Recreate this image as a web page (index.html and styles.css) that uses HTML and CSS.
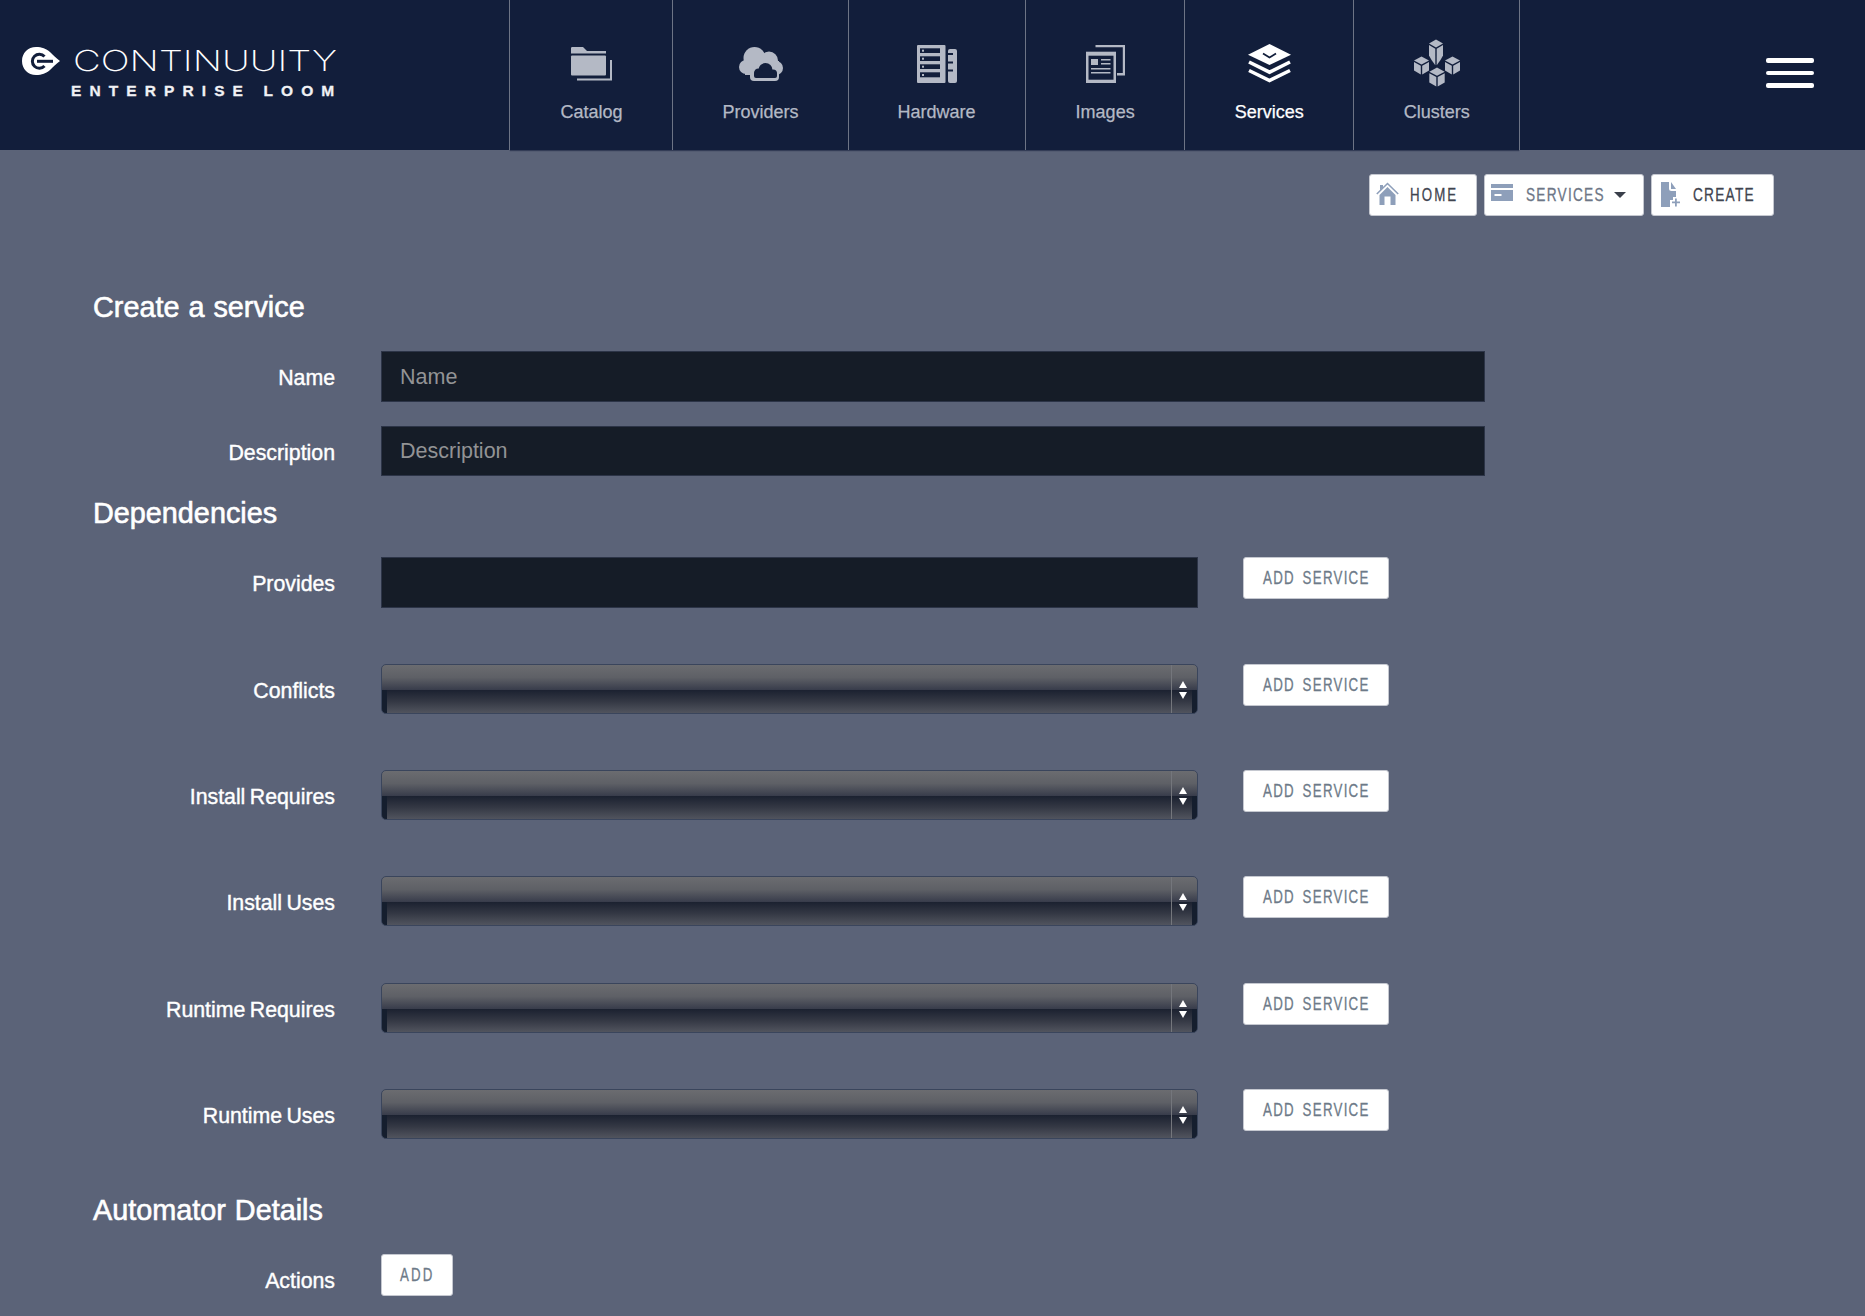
FILE: index.html
```html
<!DOCTYPE html>
<html lang="en">
<head>
<meta charset="utf-8">
<title>Continuuity Enterprise Loom</title>
<link rel="stylesheet" href="styles.css">
</head>
<body>
<header class="topbar">
  <div class="brand">
    <svg class="brand-mark" viewBox="0 0 38 28" aria-hidden="true">
      <path class="mark-fill" d="M14 0C20 0 24 1.500 28 5C31 8 34 11 38 14C34 17 31 20 28 23C24 26.500 20 28 14 28C6 28 0 22 0 14C0 6 6 0 14 0Z"/>
      <path class="mark-cut" d="M22.500 9.500A7 7 0 1 0 22.500 19"/>
      <path class="mark-cut" d="M15 14.300H31"/>
    </svg>
    <div class="brand-text">
      <div class="brand-name">CONTINUUITY</div>
      <div class="brand-sub">ENTERPRISE LOOM</div>
    </div>
  </div>
  <nav class="mainnav">
    <a class="navitem">
      <svg class="navicon" width="41" height="34" viewBox="0 0 41 34"><path d="M0 1.200Q0 0 1.200 0H12L16 4H35V6.500H0Z"/><rect y="8.500" width="35" height="20" rx="1"/><path d="M39 13H41V33.500H6V31.500H39Z"/></svg>
      <span>Catalog</span>
    </a>
    <a class="navitem">
      <svg class="navicon" width="44" height="34" viewBox="0 0 44 34"><circle cx="15.500" cy="11" r="11"/><circle cx="30" cy="13.500" r="9"/><circle cx="37" cy="21" r="7"/><circle cx="7" cy="20" r="7"/><rect x="6" y="14" width="34" height="14"/><rect x="11" y="20" width="29" height="14" rx="4"/><g class="icon-cut"><circle cx="26.500" cy="23" r="7"/><circle cx="19.500" cy="26" r="4.500"/><circle cx="34" cy="26.500" r="4"/><rect x="15" y="25" width="23" height="6" rx="2"/></g></svg>
      <span>Providers</span>
    </a>
    <a class="navitem">
      <svg class="navicon" width="40" height="38" viewBox="0 0 40 38"><rect width="28.500" height="38" rx="1"/><path d="M31 6Q31 4 33 4H38Q40 4 40 6V36Q40 38 38 38H33Q31 38 31 36Z"/><g class="icon-cut"><rect x="3" y="3.300" width="20" height="4.700"/><rect x="3" y="11.300" width="20" height="4.700"/><rect x="3" y="19.300" width="20" height="4.700"/><rect x="3" y="27.300" width="20" height="5"/><rect x="30" y="8" width="6" height="2"/><rect x="30" y="16.500" width="6" height="2"/><rect x="30" y="24.500" width="6" height="2"/></g><rect x="5" y="4.700" width="2" height="2"/><rect x="5" y="12.700" width="2" height="2"/><rect x="5" y="20.700" width="2" height="2"/><rect x="5" y="29" width="2" height="2"/></svg>
      <span>Hardware</span>
    </a>
    <a class="navitem">
      <svg class="navicon" width="39" height="38" viewBox="0 0 39 38"><path d="M9.500 0H39V30.500H31V28H36.800V2.300H9.500Z"/><rect y="6.700" width="30" height="31.300"/><g class="icon-cut"><rect x="2.500" y="10.700" width="25" height="24"/></g><rect x="5" y="14" width="7" height="6"/><rect x="15" y="14" width="9.500" height="1.500"/><rect x="15" y="18" width="9.500" height="1.500"/><rect x="5" y="23" width="19.500" height="1.500"/><rect x="5" y="27" width="19.500" height="1.500"/></svg>
      <span>Images</span>
    </a>
    <a class="navitem navitem-active">
      <svg class="navicon" width="43" height="38" viewBox="0 0 43 38"><path d="M21.500 0L43 10.700L21.500 21L0 10.700Z"/><path class="icon-line" d="M15 9.500L21.500 13.500L28 9.500"/><path class="icon-stroke" d="M1 18L21.500 28.200L42 18"/><path class="icon-stroke" d="M1 26.500L21.500 36.500L42 26.500"/></svg>
      <span>Services</span>
    </a>
    <a class="navitem">
      <svg class="navicon" width="46" height="47" viewBox="0 0 46 47">
        <g><path d="M22 0L29 4L22 8L15 4Z"/><path d="M15 5.500L21.300 9.200V25.700L17.500 20.500L15 16Z"/><path d="M29 5.500L22.700 9.200V25.700L26.500 20.500L29 16Z"/></g>
        <g><path d="M7.500 17L15 21L7.500 25L0 21Z"/><path d="M0 22.500L6.800 26.300V35L0 31Z"/><path d="M15 22.500L8.200 26.300V35L15 31Z"/></g>
        <g><path d="M38.500 17L46 21L38.500 25L31 21Z"/><path d="M31 22.500L37.800 26.300V35L31 31Z"/><path d="M46 22.500L39.200 26.300V35L46 31Z"/></g>
        <g><path d="M23 28L30.700 32.200L23 36.300L15.300 32.200Z"/><path d="M15.300 33.700L22.300 37.500V47L15.300 43Z"/><path d="M30.700 33.700L23.700 37.500V47L30.700 43Z"/></g>
      </svg>
      <span>Clusters</span>
    </a>
  </nav>
  <button class="burger" type="button" aria-label="Menu"><span></span><span></span><span></span></button>
</header>

<main class="page">
  <div class="crumbs">
    <a class="crumb crumb-home">
      <svg class="crumb-icon" width="23" height="23" viewBox="0 0 23 23"><path class="crumb-roof" d="M.800 12L11.500 1.500L22.200 12"/><path d="M4 3H7V5.500L4 8.500Z"/><path d="M3.500 13L11.500 5L19.500 13V23H14.500V14.500H8.500V23H3.500Z"/></svg>
      <span class="cond cond-home">HOME</span>
    </a>
    <a class="crumb crumb-services">
      <svg class="crumb-icon" width="22" height="17" viewBox="0 0 22 17"><rect width="22" height="4"/><rect y="6" width="22" height="11"/><rect class="crumb-cut" x="3.500" y="10" width="7" height="2"/></svg>
      <span class="cond cond-services">SERVICES</span>
      <i class="caret"></i>
    </a>
    <a class="crumb crumb-create">
      <svg class="crumb-icon" width="19" height="25" viewBox="0 0 19 25"><path d="M0 0H8V6.500Q8 9 10.500 9H15V15H12V18H9V25H0Z"/><path d="M10 0L15 7H10Z"/><path d="M14 16.500H15.800V19.500H19V21.300H15.800V24.500H14V21.300H11V19.500H14Z"/></svg>
      <span class="cond cond-create">CREATE</span>
    </a>
  </div>

  <form class="form">
    <h2 class="heading heading-first">Create a service</h2>
    <div class="row">
      <label class="row-label">Name</label>
      <input class="field field-wide" type="text" placeholder="Name">
    </div>
    <div class="row">
      <label class="row-label">Description</label>
      <input class="field field-wide" type="text" placeholder="Description">
    </div>

    <h2 class="heading heading-dep">Dependencies</h2>
    <div class="row row-dep">
      <label class="row-label">Provides</label>
      <input class="field field-mid" type="text">
      <button class="add add-service" type="button"><span class="cond cond-add">ADD SERVICE</span></button>
    </div>
    <div class="row row-dep">
      <label class="row-label">Conflicts</label>
      <div class="select"><div class="select-body"></div><div class="select-arrows"><i class="arrow-up"></i><i class="arrow-down"></i></div></div>
      <button class="add add-service" type="button"><span class="cond cond-add">ADD SERVICE</span></button>
    </div>
    <div class="row row-dep">
      <label class="row-label">Install Requires</label>
      <div class="select"><div class="select-body"></div><div class="select-arrows"><i class="arrow-up"></i><i class="arrow-down"></i></div></div>
      <button class="add add-service" type="button"><span class="cond cond-add">ADD SERVICE</span></button>
    </div>
    <div class="row row-dep">
      <label class="row-label">Install Uses</label>
      <div class="select"><div class="select-body"></div><div class="select-arrows"><i class="arrow-up"></i><i class="arrow-down"></i></div></div>
      <button class="add add-service" type="button"><span class="cond cond-add">ADD SERVICE</span></button>
    </div>
    <div class="row row-dep">
      <label class="row-label">Runtime Requires</label>
      <div class="select"><div class="select-body"></div><div class="select-arrows"><i class="arrow-up"></i><i class="arrow-down"></i></div></div>
      <button class="add add-service" type="button"><span class="cond cond-add">ADD SERVICE</span></button>
    </div>
    <div class="row row-last">
      <label class="row-label">Runtime Uses</label>
      <div class="select"><div class="select-body"></div><div class="select-arrows"><i class="arrow-up"></i><i class="arrow-down"></i></div></div>
      <button class="add add-service" type="button"><span class="cond cond-add">ADD SERVICE</span></button>
    </div>

    <h2 class="heading heading-auto">Automator Details</h2>
    <div class="row">
      <label class="row-label">Actions</label>
      <button class="add add-small" type="button"><span class="cond cond-small">ADD</span></button>
    </div>
  </form>
</main>
</body>
</html>
```

FILE: styles.css
```css
* { box-sizing: border-box; }
html, body { margin: 0; height: 100%; }
body {
  background: #5b6378;
  font-family: "Liberation Sans", Arial, sans-serif;
  overflow: hidden;
  color: #fff;
}

/* top bar */
.topbar {
  display: flex;
  align-items: stretch;
  height: 150px;
  background: #121e3b;
}
.brand {
  display: flex;
  width: 509px;
  padding: 47px 0 0 22px;
  align-items: flex-start;
}
.brand-mark { width: 38px; height: 28px; flex: none; }
.mark-fill { fill: #fff; }
.mark-cut { fill: none; stroke: #121e3b; stroke-width: 3; }
.brand-text { margin-left: 12px; }
.brand-name {
  font-family: Inter, "Liberation Sans", sans-serif;
  font-weight: 200;
  font-size: 29px;
  line-height: 29px;
  margin-top: -1px;
  margin-left: 1px;
  white-space: nowrap;
  color: #fff;
  transform: scaleX(1.32);
  transform-origin: left center;
}
.brand-sub {
  font-weight: 700;
  font-size: 15.500px;
  line-height: 15px;
  letter-spacing: 8.100px;
  white-space: nowrap;
  margin-top: 8px;
  margin-left: -1px;
  color: #f0f1f4;
  -webkit-text-stroke: .3px currentColor;
}
.mainnav {
  display: flex;
  border-right: 1px solid #6d7485;
  box-shadow: 0 2px 1px -1px rgba(18, 30, 59, .55);
}
.navitem {
  display: flex;
  flex-direction: column;
  align-items: center;
  padding: 0 49.500px;
  border-left: 1px solid #6d7485;
  color: #b4b9c5;
  font-size: 18px;
  line-height: 20px;
  -webkit-text-stroke: .25px currentColor;
}
.navitem:first-child { padding-left: 50.500px; }
.navitem:nth-child(3) { padding-left: 48.500px; }
.navicon {
  flex: none;
  height: 48px;
  margin-top: 40px;
  margin-bottom: 14px;
  fill: #b4b9c5;
  overflow: visible;
}
.navitem:last-child .navicon { margin-top: 39px; margin-bottom: 15px; }
.navitem-active { color: #fff; }
.navitem-active .navicon { fill: #fff; margin-top: 39px; margin-bottom: 15px; }
.icon-cut { fill: #121e3b; }
.icon-line { fill: none; stroke: #121e3b; stroke-width: 1.800; }
.icon-stroke { fill: none; stroke: #fff; stroke-width: 3.600; }
.burger {
  display: flex;
  flex-direction: column;
  gap: 8px;
  margin: 58px 51px 0 auto;
  padding: 0;
  width: 48px;
  height: 30px;
  border: 0;
  background: none;
}
.burger span {
  display: block;
  height: 4.500px;
  width: 48px;
  border-radius: 2px;
  background: #fff;
}

/* condensed button lettering */
.cond {
  display: inline-block;
  font-family: "Liberation Sans", Arial, sans-serif;
  font-size: 19px;
  line-height: 20px;
  white-space: nowrap;
  text-align: left;
  transform-origin: left center;
  -webkit-text-stroke: .3px currentColor;
}
.cond-home { width: 46px; letter-spacing: 3px; transform: scaleX(.7); }
.cond-services { width: 78px; letter-spacing: 1.700px; transform: scaleX(.72); }
.cond-create { width: 60px; letter-spacing: 1.700px; transform: scaleX(.72); }
.cond-add { width: 107px; letter-spacing: 1.800px; word-spacing: 4px; transform: scaleX(.7); }
.cond-small { width: 34px; letter-spacing: 3px; transform: scaleX(.7); }

/* breadcrumb buttons */
.crumbs {
  display: flex;
  justify-content: flex-end;
  gap: 7px;
  padding: 24px 91.500px 0 0;
}
.crumb {
  display: flex;
  align-items: center;
  height: 42px;
  padding-left: 6px;
  background: #fff;
  border: 1px solid #c5c8d0;
  border-radius: 3px;
  color: #3f444f;
}
.crumb-home { width: 108px; }
.crumb-services { width: 160px; color: #6d7686; }
.crumb-create { width: 123px; padding-left: 9px; }
.crumb-icon { fill: #8e9fba; flex: none; margin-right: 11px; }
.crumb-cut { fill: #fff; }
.crumb-roof { fill: none; stroke: #8e9fba; stroke-width: 1.600; }
.crumb-services .crumb-icon { margin: -6px 13px 0 0; }
.crumb-home .crumb-icon { margin-top: -4px; }
.crumb-create .crumb-icon { margin: -2px 13px 0 0; }
.caret {
  width: 0;
  height: 0;
  margin-left: 10px;
  border: 6px solid transparent;
  border-top: 6px solid #3a3f4a;
  border-bottom: 0;
}

/* form */
.form { padding-left: 93px; }
.heading {
  margin: 0 0 24px;
  font-size: 28.800px;
  line-height: 40px;
  font-weight: 400;
  word-spacing: 1px;
  -webkit-text-stroke: .6px #fff;
}
.heading-first { margin-top: 71px; }
.heading-dep { margin-top: -7px; }
.heading-auto { margin-top: 51px; }
.row {
  display: flex;
  align-items: flex-start;
  margin-bottom: 24px;
}
.row-dep { margin-bottom: 56.300px; }
.row-last { margin-bottom: 0; }
.row-label {
  width: 242px;
  flex: none;
  margin-right: 46px;
  padding-top: 2px;
  height: 50px;
  line-height: 50px;
  text-align: right;
  font-size: 21.300px;
  word-spacing: -1.500px;
  -webkit-text-stroke: .4px #fff;
}
.field {
  height: 50.500px;
  padding: 2px 18px 0;
  background: #151c27;
  border: 1px solid #2c3447;
  border-radius: 0;
  color: #fff;
  font-family: "Liberation Sans", Arial, sans-serif;
  font-size: 21.500px;
  outline: none;
}
.field::placeholder { color: #929395; opacity: 1; }
.field-wide { width: 1104px; }
.field-mid { width: 817px; }

.select {
  display: flex;
  flex: none;
  width: 817px;
  height: 50px;
  border: 1px solid #3a455c;
  border-radius: 5px;
  overflow: hidden;
  background:
    linear-gradient(#151e2e, #151e2e) left 25px / 5px 100% no-repeat,
    linear-gradient(#151e2e, #151e2e) right 25px / 5px 100% no-repeat,
    linear-gradient(#6b6c70 0, #5e6066 26%, #383c4b 52%, #1b2130 52%, #343844 76%, #51545e 100%);
}
.select-body { flex: 1; }
.select-arrows {
  display: flex;
  flex-direction: column;
  align-items: center;
  width: 26px;
  padding: 16px 3px 0 0;
  gap: 4px;
  border-left: 1px solid #74767c;
  flex: none;
}
.arrow-up, .arrow-down {
  display: block;
  width: 0;
  height: 0;
  border-left: 4.500px solid transparent;
  border-right: 4.500px solid transparent;
}
.arrow-up { border-bottom: 7px solid #fff; }
.arrow-down { border-top: 7px solid #fff; }

.add {
  height: 42px;
  padding: 0;
  background: #fff;
  border: 1px solid #c5c8d0;
  border-radius: 3px;
  color: #6d7a88;
  flex: none;
}
.add-service { width: 146px; margin-left: 45px; }
.add-small { width: 72px; }
```
